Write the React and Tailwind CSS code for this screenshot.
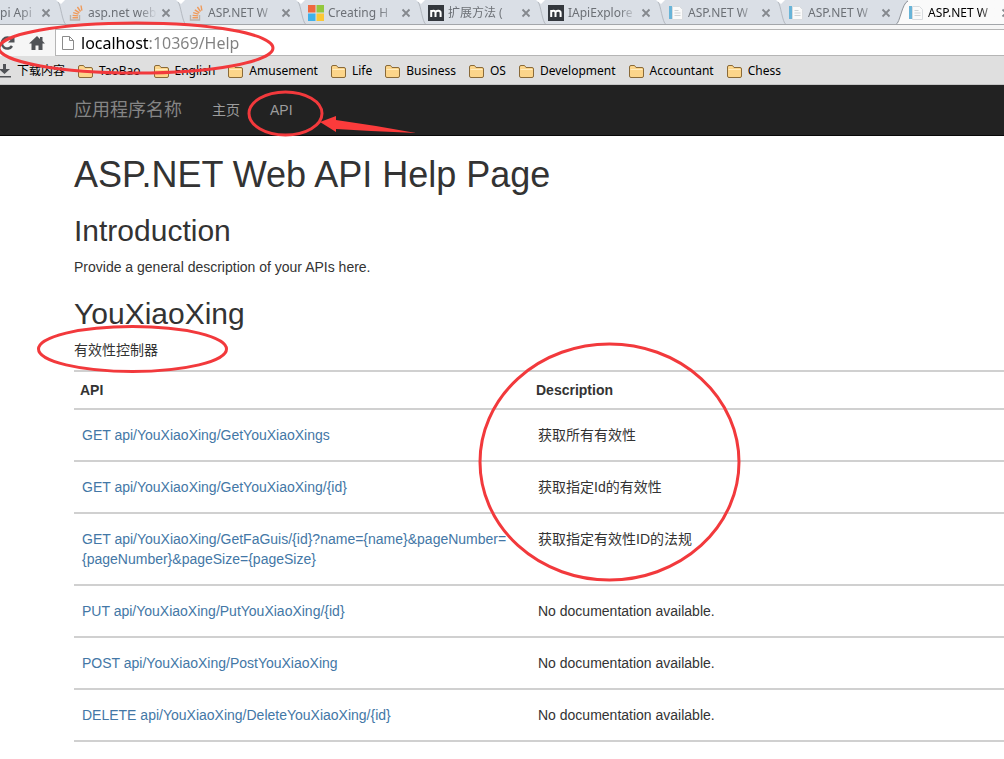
import clsx from 'clsx';

const tabs = [
  { icon: 'stack', title: 'asp.net web' },
  { icon: 'stack', title: 'ASP.NET W' },
  { icon: 'windows', title: 'Creating H' },
  { icon: 'm', title: '扩展方法 (' },
  { icon: 'm', title: 'IApiExplore' },
  { icon: 'page', title: 'ASP.NET W' },
  { icon: 'page', title: 'ASP.NET W' },
  { icon: 'page', title: 'ASP.NET W', active: true },
];

const bookmarks = ['TaoBao', 'English', 'Amusement', 'Life', 'Business', 'OS', 'Development', 'Accountant', 'Chess'];

const apis = [
  { path: 'GET api/YouXiaoXing/GetYouXiaoXings', description: '获取所有有效性' },
  { path: 'GET api/YouXiaoXing/GetYouXiaoXing/{id}', description: '获取指定Id的有效性' },
  {
    path: 'GET api/YouXiaoXing/GetFaGuis/{id}?name={name}&pageNumber={pageNumber}&pageSize={pageSize}',
    description: '获取指定有效性ID的法规',
  },
  { path: 'PUT api/YouXiaoXing/PutYouXiaoXing/{id}', description: 'No documentation available.' },
  { path: 'POST api/YouXiaoXing/PostYouXiaoXing', description: 'No documentation available.' },
  { path: 'DELETE api/YouXiaoXing/DeleteYouXiaoXing/{id}', description: 'No documentation available.' },
];

function Favicon({ type }) {
  return (
    <svg viewBox="0 0 16 16" className="size-4 shrink-0">
      {type === 'stack' && (
        <g fill="none" strokeWidth="1.4">
          <path d="M2.5 10v5h9v-5" stroke="#b9b3ad" />
          <path d="M4.5 12.8h5.5M4.6 10.4l5.5.5M5.2 7.7l5.3 1.5M6.8 4.8l4.6 3M9.4 2l3.2 4.5M13 .5l.9 5.2" stroke="#ef9a5b" />
        </g>
      )}
      {type === 'windows' && (
        <g>
          <path fill="#f0683f" d="M0 0h7.5v7.5H0z" />
          <path fill="#93c83e" d="M8.5 0H16v7.5H8.5z" />
          <path fill="#3fb1ea" d="M0 8.5h7.5V16H0z" />
          <path fill="#fbc734" d="M8.5 8.5H16V16H8.5z" />
        </g>
      )}
      {type === 'm' && (
        <g>
          <path fill="#33373d" d="M0 0h16v16H0z" />
          <path d="M3.2 12V5M3.2 7.2c.5-2 4.3-2 4.3.5V12M7.7 7.2c.7-2 4.9-2 4.9.7V12" fill="none" stroke="#fff" strokeWidth="2" />
        </g>
      )}
      {type === 'page' && (
        <g>
          <path fill="#fafafa" stroke="#d9dcdf" d="M4.5 1.5h7l3 3v10h-10z" />
          <path fill="#68b4d8" d="M1 1h3v13H1z" />
          <path d="M6.5 5.5h4M6.5 8h6M6.5 10.5h6" stroke="#cfd2d4" />
        </g>
      )}
    </svg>
  );
}

function CloseButton() {
  return (
    <button type="button" aria-label="Close tab" className="shrink-0 text-[#85898e]">
      <svg viewBox="0 0 10 10" className="size-[10px]">
        <path d="M1.5 1.5l7 7M8.5 1.5l-7 7" stroke="currentColor" strokeWidth="1.8" />
      </svg>
    </button>
  );
}

function TabEdge({ active }) {
  return (
    <svg viewBox="0 0 12 25" className="h-[25px] w-3 shrink-0">
      {active ? (
        <g>
          <path d="M0 25C4 23 6 3 12 1v24z" fill="#fafafa" />
          <path d="M0 24.5C4 23 6 3 12 1" fill="none" stroke="#8c9198" />
        </g>
      ) : (
        <g>
          <path d="M0 0h9L5 4z" fill="#fff" />
          <path d="M2 2C5 5 6 22 10 24.5" fill="none" stroke="#b4b9c0" />
        </g>
      )}
    </svg>
  );
}

function Tab({ tab }) {
  return (
    <div className={clsx('flex w-[120px] shrink-0', tab.active && 'bg-linear-to-r from-transparent from-10% to-[#fafafa] to-10%')}>
      <TabEdge active={tab.active} />
      <div className="flex items-center pt-px">
        <Favicon type={tab.icon} />
        <span className={clsx('ml-1 w-[73px] mask-r-from-70% mask-r-to-95% whitespace-nowrap', tab.active ? 'text-black' : 'text-[#6c7076]')}>
          {tab.title}
        </span>
        <CloseButton />
      </div>
    </div>
  );
}

function FolderIcon() {
  return (
    <svg viewBox="0 0 15 13" className="h-[13px] w-[15px] shrink-0">
      <path d="M.5 11V2Q.5.5 2 .5h3.5L7 2.5h6q1.5 0 1.5 1.5v7q0 1.5-1.5 1.5H2Q.5 12.5.5 11z" fill="#fcd58a" stroke="#8a6a38" />
      <path d="M1.5 4.5h12" stroke="#ffecbf" />
    </svg>
  );
}

function Browser() {
  return (
    <header className="font-['Noto_Sans','Noto_Sans_CJK_SC',sans-serif] text-xs">
      <div className="flex h-[25px] overflow-hidden border-b border-[#a3a6aa] bg-[#dadfe6]">
        <div className="flex w-14 shrink-0 items-center pt-px">
          <span className="w-[41px] mask-r-from-50% whitespace-nowrap text-[#6c7076]">pi Api</span>
          <CloseButton />
        </div>
        {tabs.map((tab, i) => (
          <Tab key={i} tab={tab} />
        ))}
      </div>

      <div className="flex h-[31px] items-stretch bg-[#f6f6f6] pt-1">
        <button type="button" aria-label="Reload" className="w-[15px] shrink-0">
          <svg viewBox="0 0 15 16" className="h-4 w-[15px]">
            <path d="M11.5 4.5A5.5 5.5 0 1 0 12 11" fill="none" stroke="#505357" strokeWidth="2.5" />
            <path d="M14.5 1v6.5H8z" fill="#505357" />
          </svg>
        </button>
        <button type="button" aria-label="Home" className="ml-3.5 w-4 shrink-0">
          <svg viewBox="0 0 16 16" className="size-4">
            <path d="M8 1L0 8.5h2.5V15h4v-4.5h3V15h4V8.5H16L13.5 6V2H11v2z" fill="#505357" />
          </svg>
        </button>
        <div className="ml-2.5 flex flex-1 items-center border border-r-0 border-[#b5b5b5] bg-white pl-1.5">
          <svg viewBox="0 0 12 16" className="h-4 w-3 shrink-0">
            <path d="M.5 1.5h7l4 4v9H.5zM7.5 1.5v4h4" fill="#fff" stroke="#8b8b8b" />
          </svg>
          <input
            type="text"
            aria-label="Address"
            defaultValue="localhost:10369/Help"
            className="ml-[7px] min-w-0 flex-1 bg-linear-to-r from-black from-[68px] to-[#808080] to-[68px] bg-clip-text text-base text-transparent outline-none"
          />
        </div>
      </div>

      <nav className="flex h-[29px] items-center gap-[13px] overflow-hidden border-b border-[#c4c4c4] bg-[#dfdfdf] pt-0.5 whitespace-nowrap text-black">
        <a href="#" className="flex items-center gap-1.5">
          <svg viewBox="0 0 11 14" className="h-3.5 w-[11px]">
            <path d="M3 0h3v5h4l-5.500 5L-1 5h4zM0 12h11v1.500H0z" fill="#505357" />
          </svg>
          下载内容
        </a>
        {bookmarks.map((name) => (
          <a key={name} href="#" className="flex items-center gap-1.5">
            <FolderIcon />
            {name}
          </a>
        ))}
      </nav>
    </header>
  );
}

// red pen marks over the page
function Marks() {
  return (
    <svg viewBox="0 0 1004 759" className="pointer-events-none absolute top-0 left-0 h-[759px] w-[1004px]">
      <g fill="none" stroke="#f2393c" strokeWidth="3">
        <ellipse cx="136" cy="48" rx="137" ry="25" />
        <ellipse cx="285.5" cy="113.5" rx="36.5" ry="21.5" />
        <ellipse cx="132.5" cy="349" rx="94" ry="22.5" />
        <ellipse cx="609.5" cy="462" rx="129.5" ry="118" />
      </g>
      <path d="M320 122l16-6v4l40 6 40 7-45-2-35-2v3z" fill="#fb3b3b" />
    </svg>
  );
}

export default function App() {
  return (
    <div className="relative overflow-hidden bg-white">
      <Browser />

      <div className="font-['Liberation_Sans','Noto_Sans_CJK_SC',sans-serif] text-sm text-[#333]">
        <nav className="flex h-[51px] items-center border-b border-[#080808] bg-[#222] pl-[74px] text-[#9d9d9d]">
          <a href="#" className="text-lg text-[#858585]">应用程序名称</a>
          <a href="#" className="ml-[30px]">主页</a>
          <a href="#" className="ml-[30px]">API</a>
        </nav>

        <main className="pt-[19px] pl-[74px]">
          <h1 className="text-4xl leading-10">ASP.NET Web API Help Page</h1>
          <h2 className="mt-[19px] text-3xl leading-[33px]">Introduction</h2>
          <p className="mt-2.5">Provide a general description of your APIs here.</p>
          <h2 className="mt-5 text-3xl leading-[33px]">YouXiaoXing</h2>
          <p className="mt-2.5">有效性控制器</p>

          <table className="mt-2.5 w-full table-fixed border-y-2 border-[#d0d0d0] text-left">
            <thead>
              <tr>
                <th className="w-[456px] px-1.5 py-2">API</th>
                <th className="px-1.5 py-2">Description</th>
              </tr>
            </thead>
            <tbody>
              {apis.map((api) => (
                <tr key={api.path} className="border-t-2 border-[#d0d0d0] align-top">
                  <td className="px-2 py-[15px]">
                    <a href="#" className="text-[#4377a6]">{api.path}</a>
                  </td>
                  <td className="px-2 py-[15px]">{api.description}</td>
                </tr>
              ))}
            </tbody>
          </table>
        </main>
      </div>

      <Marks />
    </div>
  );
}
